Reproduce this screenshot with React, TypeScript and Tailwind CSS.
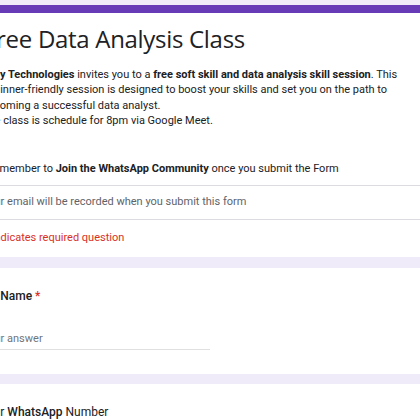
export default function App() {
  return (
    <div className="min-h-screen overflow-hidden bg-[#f0ebf8] pt-[5px] font-['Roboto',sans-serif] text-[#202124]">
      {/* header card */}
      <div className="ml-[-20px] w-[460px] rounded-t-lg border-t-[8px] border-[#673ab7] bg-white pl-[20px]">
        <div className="pt-[10px]">
          <h1 className="ml-[-16px] whitespace-nowrap font-['Open_Sans',sans-serif] text-[24px] leading-[32px] tracking-[-0.3px]">
            Free Data Analysis Class
          </h1>
          <div className="mt-[12px] text-[11px] leading-[15.4px] whitespace-nowrap">
            <p>
              <b className="font-bold">y Technologies</b> invites you to a{" "}
              <b className="font-bold">free soft skill and data analysis skill session</b>. This
            </p>
            <p className="ml-[-18px]">beginner-friendly session is designed to boost your skills and set you on the path to</p>
            <p className="ml-[-18px]">becoming a successful data analyst.</p>
            <p className="ml-[-18px]">The class is schedule for 8pm via Google Meet.</p>
            <p className="mt-[32px] ml-[-13px]">
              Remember to <b className="font-bold">Join the WhatsApp Community</b> once you submit the Form
            </p>
          </div>
        </div>
        <div className="mt-[9px] ml-[-20px] flex h-[34px] items-center border-t border-[#dadce0] pl-[20px] text-[11px] text-[#5f6368] whitespace-nowrap">
          <span className="ml-[-18px]">Your email will be recorded when you submit this form</span>
        </div>
        <div className="ml-[-20px] flex h-[38px] items-center border-t border-[#dadce0] pl-[20px] text-[11px] text-[#d93025] whitespace-nowrap">
          <span className="ml-[-16px]">* Indicates required question</span>
        </div>
      </div>

      {/* question: name */}
      <div className="mt-[11px] ml-[-20px] h-[106px] w-[460px] rounded-lg bg-white pt-[20px] pl-[20px]">
        <p className="ml-[-22px] text-[12px] font-medium leading-[16px] whitespace-nowrap">
          Full Name <span className="text-[#d93025]">*</span>
        </p>
        <div className="mt-[28px] ml-[-20px] w-[230px] border-b border-[#e0e0e0] pb-[3px] pl-[2px] text-[11px] leading-[14px] text-[#70757a]">
          Your answer
        </div>
      </div>

      {/* question: whatsapp */}
      <div className="mt-[10px] ml-[-20px] h-[100px] w-[460px] rounded-lg bg-white pt-[20px] pl-[20px]">
        <p className="ml-[-20px] text-[12px] leading-[16px] whitespace-nowrap">
          Your <span className="font-medium">WhatsApp</span> Number
        </p>
      </div>
    </div>
  );
}
